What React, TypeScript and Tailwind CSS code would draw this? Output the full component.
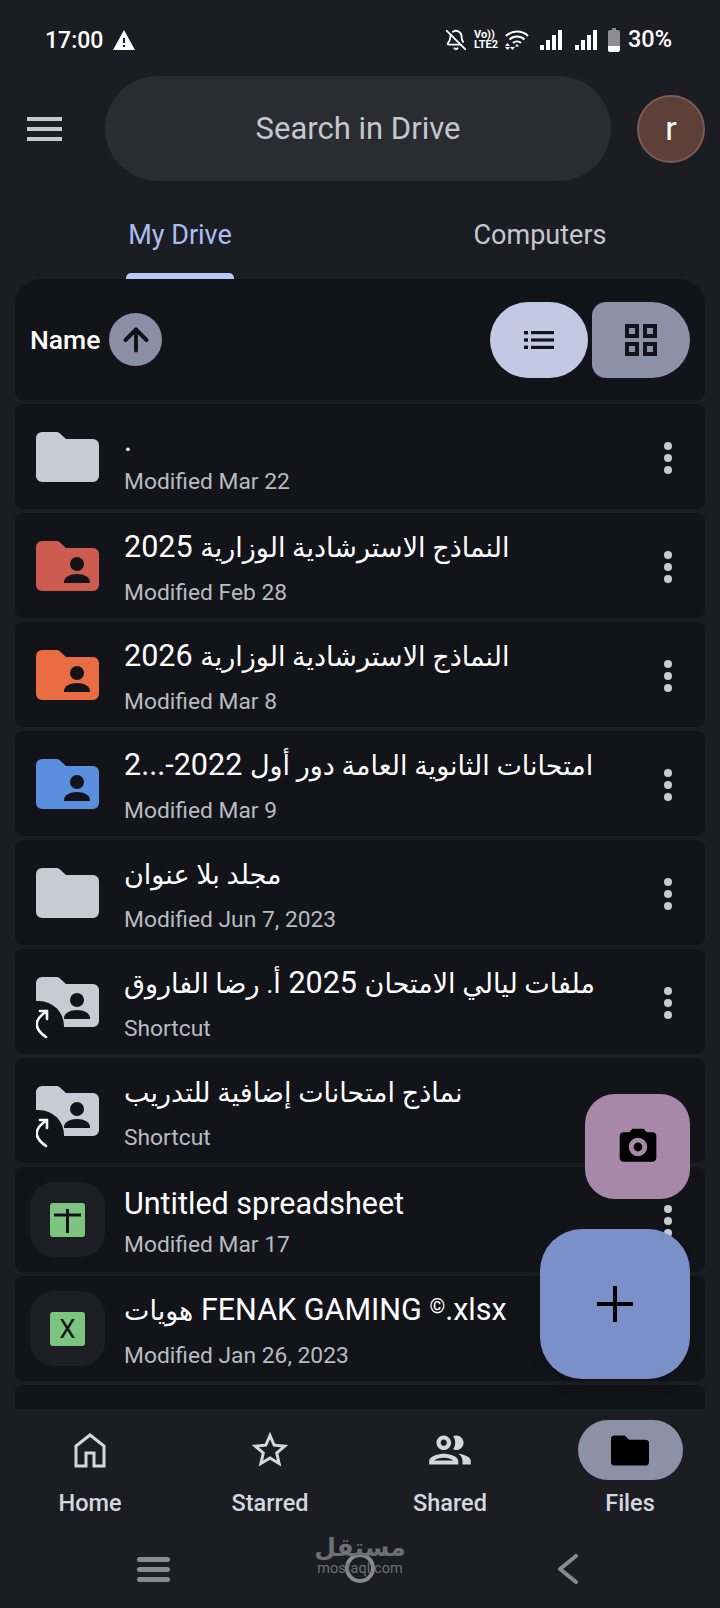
import { ArrowUp, BellOff } from 'lucide-react';

interface DriveRow {
  title: string;
  sub: string;
  icon: 'folder' | 'shared' | 'shortcut' | 'sheet' | 'excel';
  color?: string;
  rtl?: boolean;
  tall?: boolean;
}

const rows: DriveRow[] = [
  { title: '.', sub: 'Modified Mar 22', icon: 'folder', color: '#c9cad4' },
  { title: 'النماذج الاسترشادية الوزارية 2025', sub: 'Modified Feb 28', icon: 'shared', color: '#ce5b50', rtl: true, tall: true },
  { title: 'النماذج الاسترشادية الوزارية 2026', sub: 'Modified Mar 8', icon: 'shared', color: '#e96c43', rtl: true, tall: true },
  { title: 'امتحانات الثانوية العامة دور أول 2022-...2', sub: 'Modified Mar 9', icon: 'shared', color: '#5a8fe0', rtl: true, tall: true },
  { title: 'مجلد بلا عنوان', sub: 'Modified Jun 7, 2023', icon: 'folder', color: '#c9cad4', rtl: true, tall: true },
  { title: 'ملفات ليالي الامتحان 2025 أ. رضا الفاروق', sub: 'Shortcut', icon: 'shortcut', rtl: true, tall: true },
  { title: 'نماذج امتحانات إضافية للتدريب', sub: 'Shortcut', icon: 'shortcut', rtl: true, tall: true },
  { title: 'Untitled spreadsheet', sub: 'Modified Mar 17', icon: 'sheet' },
  { title: 'هويات FENAK GAMING ©.xlsx', sub: 'Modified Jan 26, 2023', icon: 'excel', tall: true },
];

const folderPath = 'M0 6a6 6 0 0 1 6-6h15a4 4 0 0 1 3 1.5L30 7h27a6 6 0 0 1 6 6v31a6 6 0 0 1-6 6H6a6 6 0 0 1-6-6z';

function FolderIcon({ color, person }: { color: string; person?: boolean }) {
  return (
    <svg width="63" height="50" viewBox="0 0 63 50">
      <path d={folderPath} fill={color} />
      {person && (
        <>
          <circle cx="41" cy="23" r="7" fill="#12141a" />
          <path d="M28 42v-1c0-5 6-8 13-8s13 3 13 8v1z" fill="#12141a" />
        </>
      )}
    </svg>
  );
}

function ShortcutIcon() {
  return (
    <svg width="63" height="64" viewBox="0 0 63 64" className="mt-[14px]">
      <path d={folderPath} fill="#c9cad4" />
      <circle cx="41" cy="23" r="7" fill="#12141a" />
      <path d="M28 42v-1c0-5 6-8 13-8s13 3 13 8v1z" fill="#12141a" />
      <path d="M-6 24h9a25 25 0 0 1 25 25v15h-34z" fill="#12141a" />
      <path d="M10 60Q-9 47 11 34M4 34h7v8" fill="none" stroke="#fff" strokeWidth="2.6" strokeLinecap="round" strokeLinejoin="round" />
    </svg>
  );
}

function RowIcon({ row }: { row: DriveRow }) {
  if (row.icon === 'folder') return <FolderIcon color={row.color!} />;
  if (row.icon === 'shared') return <FolderIcon color={row.color!} person />;
  if (row.icon === 'shortcut') return <ShortcutIcon />;
  return (
    <div className="flex h-[75px] w-[75px] items-center justify-center rounded-[24px] bg-[#1c1e24]">
      <div className="flex h-[34px] w-[35px] items-center justify-center rounded-[3px] bg-[#7cc47f] text-[26px] leading-none text-[#12141a]">
        {row.icon === 'excel' ? (
          'X'
        ) : (
          <svg width="35" height="34" viewBox="0 0 35 34">
            <path d="M4 12h27M17.5 6v24" stroke="#12141a" strokeWidth="3" fill="none" />
          </svg>
        )}
      </div>
    </div>
  );
}

function Kebab() {
  return (
    <div className="mt-[2px] flex flex-col gap-[4px]">
      <span className="h-[8px] w-[8px] rounded-full bg-[#c9cad4]" />
      <span className="h-[8px] w-[8px] rounded-full bg-[#c9cad4]" />
      <span className="h-[8px] w-[8px] rounded-full bg-[#c9cad4]" />
    </div>
  );
}

// the Arabic in the reference runs a bit smaller than the latin next to it, the © too
function Title({ text }: { text: string }) {
  const parts = text.split(/([\u0600-\u06FF]+(?:[ .]+[\u0600-\u06FF]+)*|©)/);
  return (
    <>
      {parts.map((part, i) => {
        if (part === '©') {
          return (
            <span key={i} className="align-[7px] text-[20px] leading-none">
              {part}
            </span>
          );
        }
        return i % 2 === 1 ? (
          <span key={i} className="text-[27px]">
            {part}
          </span>
        ) : (
          <span key={i}>{part}</span>
        );
      })}
    </>
  );
}

function Row({ row }: { row: DriveRow }) {
  return (
    <div className="flex h-[105px] shrink-0 items-center rounded-[8px] bg-[#12141a]">
      <div className="ml-[15px] mr-[19px] flex w-[75px] shrink-0 items-center justify-center">
        <RowIcon row={row} />
      </div>
      <div className="flex flex-1 flex-col items-start pt-[3px]">
        <p
          dir={row.rtl ? 'rtl' : 'ltr'}
          className={`whitespace-nowrap text-[30.5px] text-white ${row.tall ? 'h-[51px] leading-[40px]' : 'mt-[2px] h-[45px] leading-[38px]'}`}
        >
          <Title text={row.title} />
        </p>
        <p className="text-[22.8px] leading-[30px] text-[#b8bbc4]">{row.sub}</p>
      </div>
      <div className="mr-[33px] shrink-0">
        <Kebab />
      </div>
    </div>
  );
}

function StatusBar() {
  return (
    <div className="flex h-[76px] items-center justify-between pl-[45px] pr-[48px] pt-[4px] text-white">
      <div className="flex items-center gap-[9px]">
        <span className="text-[23px] font-medium leading-none">17:00</span>
        <svg width="24" height="24" viewBox="0 0 24 24">
          <path d="M1 22h22L12 2 1 22zm12-3h-2v-2h2v2zm0-4h-2v-5h2v5z" fill="#fff" />
        </svg>
      </div>
      <div className="flex items-center">
        <BellOff size={22} strokeWidth={2} />
        <div className="ml-[7px] flex w-[26px] flex-col text-[11px] font-bold leading-[10px]">
          <span>Vo))</span>
          <span>LTE2</span>
        </div>
        <svg width="24" height="22" viewBox="0 0 24 22" className="ml-[5px]">
          <path d="M1 7a16 16 0 0 1 22 0M4.5 10.5a11 11 0 0 1 15 0M8 14a6 6 0 0 1 8 0" fill="none" stroke="#fff" strokeWidth="2" />
          <path d="M12 15l2 2.4h-4zM2.5 14l2.5 3H0zM2.5 21L0 18h5zM7.5 21l-2.5-3h5z" fill="#fff" />
        </svg>
        <svg width="22" height="20" viewBox="0 0 22 20" className="ml-[11px]" fill="#fff">
          <rect x="0" y="15" width="4" height="5" />
          <rect x="6" y="10" width="4" height="10" />
          <rect x="12" y="5" width="4" height="15" />
          <rect x="18" y="0" width="4" height="20" />
        </svg>
        <svg width="22" height="20" viewBox="0 0 22 20" className="ml-[13px]" fill="#fff">
          <rect x="0" y="15" width="4" height="5" />
          <rect x="6" y="10" width="4" height="10" />
          <rect x="12" y="5" width="4" height="15" />
          <rect x="18" y="0" width="4" height="20" />
        </svg>
        <svg width="12" height="24" viewBox="0 0 12 24" className="ml-[11px]">
          <path d="M0 4a2 2 0 0 1 2-2h2V0h4v2h2a2 2 0 0 1 2 2v14H0z" fill="#8e8e8e" />
          <path d="M0 18h12v4a2 2 0 0 1-2 2H2a2 2 0 0 1-2-2z" fill="#fff" />
        </svg>
        <span className="ml-[8px] text-[23.5px] font-medium leading-none">30%</span>
      </div>
    </div>
  );
}

function SearchRow() {
  return (
    <div className="flex h-[105px] items-center">
      <div className="ml-[27px] flex w-[35px] shrink-0 flex-col gap-[6px]">
        <span className="h-[4px] bg-[#c4c7d0]" />
        <span className="h-[4px] bg-[#c4c7d0]" />
        <span className="h-[4px] bg-[#c4c7d0]" />
      </div>
      <div className="ml-[43px] flex h-[105px] w-[506px] items-center justify-center rounded-full bg-[#2a2c32] pt-[2px] text-[31px] text-[#c4c7d0]">
        Search in Drive
      </div>
      <div className="ml-[26px] flex h-[68px] w-[68px] items-center justify-center rounded-full border-2 border-[#7a5c52] bg-[#5d4037] text-[34px] text-white">
        r
      </div>
    </div>
  );
}

function Tabs() {
  return (
    <div className="flex h-[98px]">
      <div className="flex flex-1 flex-col items-center pt-[38px]">
        <span className="text-[27px] leading-[32px] text-[#a9bfee]">My Drive</span>
        <span className="mt-[22px] h-[6px] w-[108px] rounded-t-[5px] bg-[#b9c9f5]" />
      </div>
      <div className="flex flex-1 flex-col items-center pt-[38px]">
        <span className="text-[27px] leading-[32px] text-[#c4c7d0]">Computers</span>
      </div>
    </div>
  );
}

function SortHeader() {
  return (
    <div className="flex h-[121px] shrink-0 items-center rounded-b-[8px] rounded-t-[26px] bg-[#12141a] pl-[15px] pr-[15px]">
      <span className="mt-[1px] text-[26.5px] font-medium text-white">Name</span>
      <div className="ml-[9px] flex h-[53px] w-[53px] items-center justify-center rounded-full bg-[#8a8fa5] text-[#101218]">
        <ArrowUp size={36} strokeWidth={2.6} />
      </div>
      <div className="ml-auto flex gap-[4px]">
        <div className="flex h-[76px] w-[98px] items-center justify-center rounded-full bg-[#c3c9e2]">
          <svg width="30" height="18" viewBox="0 0 30 18" fill="#12141a">
            <rect x="0" y="0" width="4" height="3.4" />
            <rect x="0" y="7.3" width="4" height="3.4" />
            <rect x="0" y="14.6" width="4" height="3.4" />
            <rect x="7" y="0" width="23" height="3.2" />
            <rect x="7" y="7.4" width="23" height="3.2" />
            <rect x="7" y="14.8" width="23" height="3.2" />
          </svg>
        </div>
        <div className="flex h-[76px] w-[98px] items-center justify-center rounded-l-[14px] rounded-r-[38px] bg-[#8c91a8]">
          <svg width="32" height="32" viewBox="0 0 32 32" fill="none" stroke="#12141a" strokeWidth="4">
            <rect x="2" y="2" width="10" height="10" />
            <rect x="20" y="2" width="10" height="10" />
            <rect x="2" y="20" width="10" height="10" />
            <rect x="20" y="20" width="10" height="10" />
          </svg>
        </div>
      </div>
    </div>
  );
}

function BottomNav() {
  return (
    <div className="flex h-[199px] shrink-0 flex-col bg-[#1b1d23]">
      <div className="flex pt-[11px] text-[#d5d7e0]">
        <div className="flex flex-1 flex-col items-center">
          <div className="flex h-[60px] items-center justify-center">
            <svg width="32" height="35" viewBox="0 0 32 35" fill="none" stroke="#d5d7e0" strokeWidth="3">
              <path d="M2 33V13L16 2l14 11v20H20V20h-8v13z" />
            </svg>
          </div>
          <span className="mt-[8px] text-[23.5px] font-medium leading-[30px]">Home</span>
        </div>
        <div className="flex flex-1 flex-col items-center">
          <div className="flex h-[60px] items-center justify-center">
            <svg width="44" height="44" viewBox="0 0 24 24" fill="#d5d7e0">
              <path d="M22 9.24l-7.19-.62L12 2 9.19 8.63 2 9.24l5.46 4.73L5.82 21 12 17.27 18.18 21l-1.63-7.03L22 9.24zM12 15.4l-3.76 2.27 1-4.28-3.32-2.88 4.38-.38L12 6.1l1.71 4.04 4.38.38-3.32 2.88 1 4.28L12 15.4z" />
            </svg>
          </div>
          <span className="mt-[8px] text-[23.5px] font-medium leading-[30px]">Starred</span>
        </div>
        <div className="flex flex-1 flex-col items-center">
          <div className="flex h-[60px] items-center justify-center">
            <svg width="50" height="50" viewBox="0 0 24 24" fill="#d5d7e0">
              <path d="M9 13.75c-2.34 0-7 1.17-7 3.5V19h14v-1.75c0-2.33-4.66-3.5-7-3.5zM4.34 17c.84-.58 2.87-1.25 4.66-1.25s3.82.67 4.66 1.25H4.34zM9 12c1.93 0 3.5-1.57 3.5-3.5S10.93 5 9 5 5.5 6.57 5.5 8.5 7.07 12 9 12zm0-5c.83 0 1.5.67 1.5 1.5S9.83 10 9 10s-1.5-.67-1.5-1.5S8.17 7 9 7zm7.04 6.81c1.16.84 1.96 1.96 1.96 3.44V19h4v-1.75c0-2.02-3.5-3.17-5.96-3.44zM15 12c1.93 0 3.5-1.57 3.5-3.5S16.93 5 15 5c-.54 0-1.04.13-1.5.35.63.89 1 1.98 1 3.15s-.37 2.26-1 3.15c.46.22.96.35 1.5.35z" />
            </svg>
          </div>
          <span className="mt-[8px] text-[23.5px] font-medium leading-[30px]">Shared</span>
        </div>
        <div className="flex flex-1 flex-col items-center">
          <div className="flex h-[60px] w-[105px] items-center justify-center rounded-full bg-[#8c91a8]">
            <svg width="38" height="31" viewBox="0 0 63 50">
              <path d={folderPath} fill="#000" />
            </svg>
          </div>
          <span className="mt-[8px] text-[23.5px] font-medium leading-[30px]">Files</span>
        </div>
      </div>
      <div className="relative mt-[8px] flex flex-1 items-start pt-[31px]">
        <div className="ml-[137px] flex w-[33px] flex-col gap-[5px]">
          <span className="h-[5px] rounded-full bg-[#8a8b8e]" />
          <span className="h-[5px] rounded-full bg-[#8a8b8e]" />
          <span className="h-[5px] rounded-full bg-[#8a8b8e]" />
        </div>
        <span className="ml-[175px] -mt-[4px] h-[30px] w-[30px] rounded-full border-[4px] border-[#8a8b8e]" />
        <svg width="22" height="30" viewBox="0 0 22 30" fill="none" stroke="#8a8b8e" strokeWidth="4" strokeLinecap="round" strokeLinejoin="round" className="ml-[182px] -mt-[3px]">
          <path d="M19 2L3 15l16 13" />
        </svg>
        <div className="absolute left-[316px] top-[8px] flex w-[88px] flex-col items-center text-[#6e6f72]">
          <span className="text-[25px] font-bold leading-[27px]">مستقل</span>
          <span className="text-[14.5px] leading-[16px]">mostaql.com</span>
        </div>
      </div>
    </div>
  );
}

export default function App() {
  return (
    <div className="relative flex h-[1608px] w-[720px] flex-col overflow-hidden bg-[#1b1d23] font-['Roboto','DejaVu_Sans',sans-serif]">
      <StatusBar />
      <SearchRow />
      <Tabs />
      <div className="mx-[15px] flex min-h-0 flex-1 flex-col gap-[4px] overflow-hidden">
        <SortHeader />
        {rows.map((row, i) => (
          <Row key={i} row={row} />
        ))}
        <div className="h-[105px] shrink-0 rounded-[8px] bg-[#12141a]" />
      </div>
      <BottomNav />

      <div className="absolute left-[585px] top-[1094px] flex h-[105px] w-[105px] items-center justify-center rounded-[30px] bg-[#a888a8]">
        <svg width="44" height="44" viewBox="0 0 24 24" fill="#000">
          <path d="M9 2L7.17 4H4c-1.1 0-2 .9-2 2v12c0 1.1.9 2 2 2h16c1.1 0 2-.9 2-2V6c0-1.1-.9-2-2-2h-3.17L15 2H9zm3 15c-2.76 0-5-2.24-5-5s2.24-5 5-5 5 2.24 5 5-2.24 5-5 5z" />
          <circle cx="12" cy="12" r="2.4" />
        </svg>
      </div>
      <div className="absolute left-[540px] top-[1229px] flex h-[150px] w-[150px] items-center justify-center rounded-[42px] bg-[#7b90c8] shadow-lg">
        <svg width="36" height="36" viewBox="0 0 36 36" stroke="#000" strokeWidth="4">
          <path d="M18 0v36M0 18h36" />
        </svg>
      </div>
    </div>
  );
}
